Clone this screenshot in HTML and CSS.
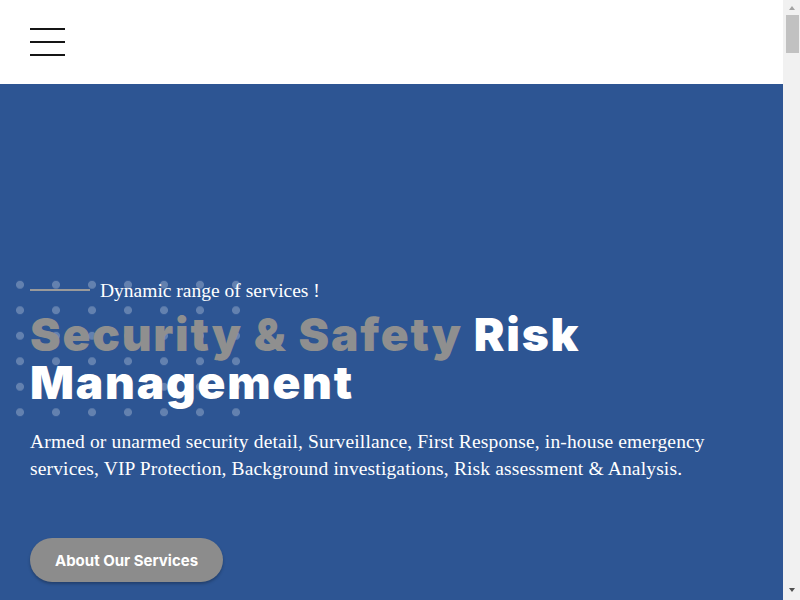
FILE: index.html
```html
<!DOCTYPE html>
<html lang="en">
<head>
<meta charset="utf-8">
<title>Security & Safety Risk Management</title>
<link rel="stylesheet" href="styles.css">
</head>
<body>
<div class="page">
<header class="site-header">
  <button class="menu-toggle" aria-label="Menu">
    <span class="bar"></span>
    <span class="bar"></span>
    <span class="bar"></span>
  </button>
</header>
<section class="hero">
  <div class="hero-inner">
    <div class="dots" aria-hidden="true"></div>
    <p class="eyebrow"><span class="eyebrow-line"></span>Dynamic range of services !</p>
    <h1 class="hero-title"><span class="muted">Security &amp; Safety</span> Risk Management</h1>
    <p class="hero-text">Armed or unarmed security detail, Surveillance, First Response, in-house emergency services, VIP Protection, Background investigations, Risk assessment &amp; Analysis.</p>
    <a class="btn" href="#">About Our Services</a>
  </div>
</section>
</div>
<div class="scrollbar" aria-hidden="true">
  <span class="sb-arrow sb-up"></span>
  <span class="sb-thumb"></span>
  <span class="sb-track"></span>
  <span class="sb-arrow sb-down"></span>
</div>
</body>
</html>
```
FILE: styles.css
```css
html, body {
  margin: 0;
  padding: 0;
}
body {
  font-family: "Liberation Serif", serif;
  background: #ffffff;
  display: flex;
  align-items: flex-start;
  height: 100vh;
  overflow: hidden;
}
.page {
  flex: 1;
  min-width: 0;
}
.scrollbar {
  width: 17px;
  height: 100vh;
  flex: none;
  background: #f1f1f1;
  display: flex;
  flex-direction: column;
  align-items: center;
}
.sb-arrow {
  width: 0;
  height: 0;
  border-left: 3.5px solid transparent;
  border-right: 3.5px solid transparent;
}
.sb-up {
  margin: 6px 0 5px;
  border-bottom: 4px solid #a3a3a3;
}
.sb-down {
  margin: 0 0 8px;
  border-top: 4px solid #505050;
}
.sb-thumb {
  width: 13px;
  height: 38px;
  margin-left: 1px;
  background: #c1c1c1;
}
.sb-track {
  flex: 1;
}
.site-header {
  height: 84px;
  background: #ffffff;
  display: flex;
  align-items: center;
  padding: 0 30px;
}
.menu-toggle {
  display: flex;
  flex-direction: column;
  gap: 11px;
  padding: 0;
  margin: 0;
  border: 0;
  background: transparent;
  width: 35px;
}
.bar {
  display: block;
  width: 35px;
  height: 2px;
  background: #151515;
}
.hero {
  background: #2d5593;
  padding: 196px 30px 120px;
}
.hero-inner {
  position: relative;
}
.dots {
  position: absolute;
  left: -28px;
  top: -8px;
  width: 252px;
  height: 153px;
  background-image: radial-gradient(circle, rgba(255,255,255,0.26) 3.6px, transparent 4.4px);
  background-size: 36px 25.5px;
  background-position: 0 0;
  z-index: 0;
}
.eyebrow {
  position: relative;
  z-index: 1;
  margin: 0;
  display: flex;
  align-items: center;
  color: #ffffff;
  font-size: 19.5px;
  line-height: 22px;
}
.eyebrow-line {
  display: inline-block;
  width: 60px;
  height: 2px;
  background: #9a9a9a;
  margin-right: 10px;
  margin-top: -2px;
}
.hero-title {
  position: relative;
  z-index: 1;
  margin: 8px 0 0;
  font-family: Inter, "Open Sans", sans-serif;
  font-weight: 900;
  font-size: 46px;
  line-height: 48px;
  letter-spacing: 1.8px;
  color: #ffffff;
  max-width: 620px;
}
.muted {
  color: #8f8f8f;
}
.hero-text {
  position: relative;
  z-index: 1;
  margin: 22px 0 0;
  color: #ffffff;
  font-size: 19.5px;
  letter-spacing: 0.15px;
  line-height: 27px;
  max-width: 710px;
}
.btn {
  display: inline-flex;
  align-items: center;
  justify-content: center;
  margin-top: 56px;
  width: 193px;
  height: 44px;
  border-radius: 22px;
  background: #8c8c8c;
  color: #ffffff;
  font-family: Inter, "Open Sans", sans-serif;
  font-weight: 700;
  font-size: 15px;
  text-decoration: none;
  box-shadow: 0 2px 3px rgba(0,0,0,0.25);
}
```
